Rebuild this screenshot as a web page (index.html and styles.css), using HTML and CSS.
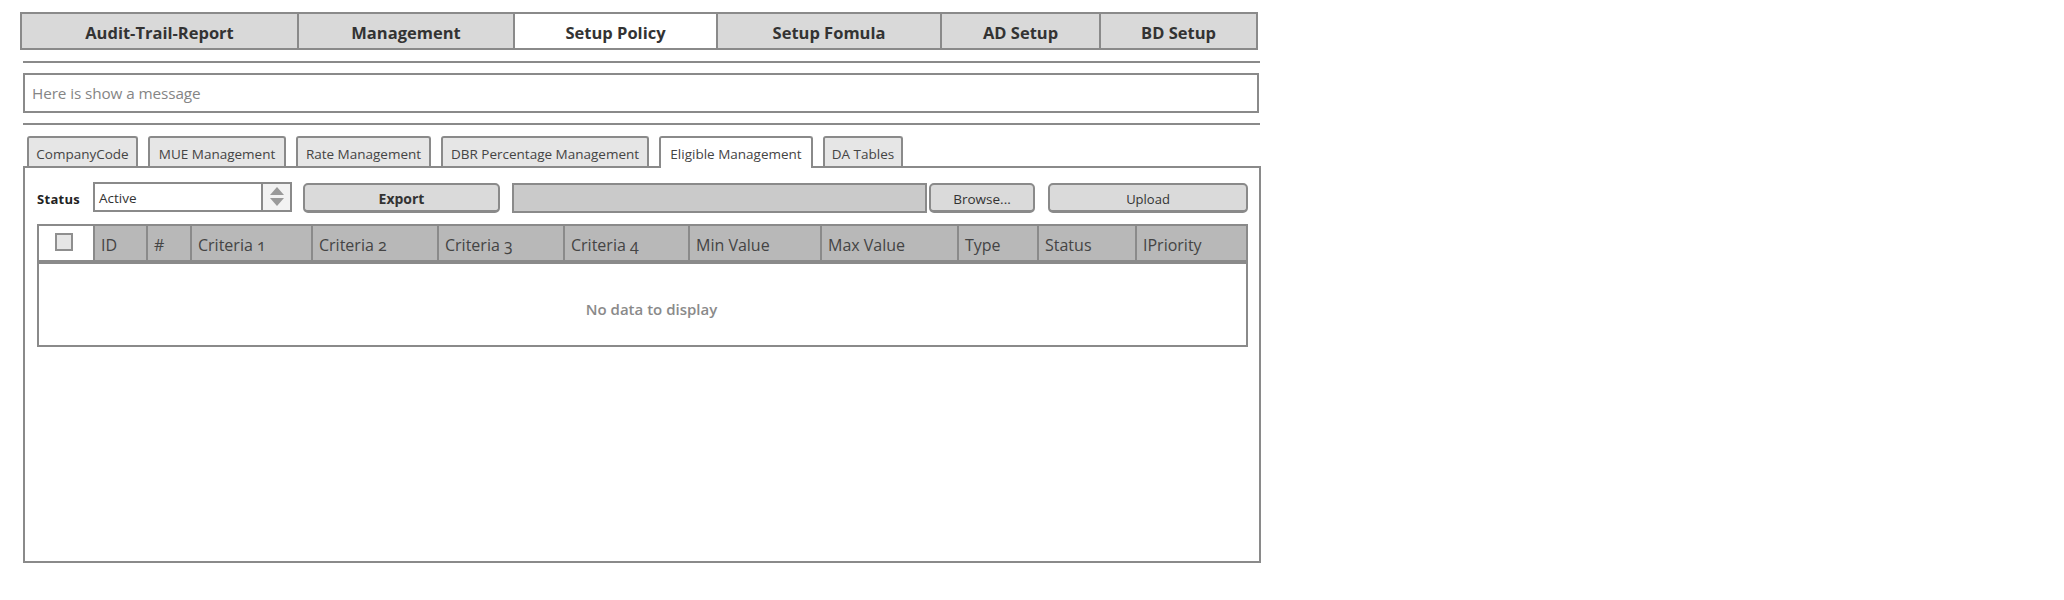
FILE: index.html
```html
<!DOCTYPE html>
<html>
<head>
<meta charset="utf-8">
<title>Eligible Management</title>
<link rel="stylesheet" href="styles.css">
</head>
<body>
<div class="page">
  <div class="maintabs">
    <div class="mtab t1">Audit-Trail-Report</div>
    <div class="mtab t2">Management</div>
    <div class="mtab t3 active">Setup Policy</div>
    <div class="mtab t4">Setup Fomula</div>
    <div class="mtab t5">AD Setup</div>
    <div class="mtab t6">BD Setup</div>
  </div>
  <div class="rule"></div>
  <div class="message">Here is show a message</div>
  <div class="rule rule2"></div>
  <div class="subtabs">
    <div class="stab s1">CompanyCode</div>
    <div class="stab s2">MUE Management</div>
    <div class="stab s3">Rate Management</div>
    <div class="stab s4">DBR Percentage Management</div>
    <div class="stab s5 active">Eligible Management</div>
    <div class="stab s6">DA Tables</div>
  </div>
  <div class="panel">
    <div class="toolbar">
      <span class="label">Status</span>
      <div class="select">
        <span class="select-value">Active</span>
        <span class="spinner">
          <svg width="14" height="20" viewBox="0 0 14 20"><polygon points="7,0 14,8 0,8" fill="#9a9a9a"/><polygon points="0,11 14,11 7,19" fill="#9a9a9a"/></svg>
        </span>
      </div>
      <button class="btn btn-export">Export</button>
      <div class="file"></div>
      <button class="btn btn-browse">Browse...</button>
      <button class="btn btn-upload">Upload</button>
    </div>
    <div class="grid">
      <div class="ghead">
        <div class="hcell chk"><span class="checkbox"></span></div>
        <div class="hcell">ID</div>
        <div class="hcell">#</div>
        <div class="hcell">Criteria 1</div>
        <div class="hcell">Criteria 2</div>
        <div class="hcell">Criteria 3</div>
        <div class="hcell">Criteria 4</div>
        <div class="hcell">Min Value</div>
        <div class="hcell">Max Value</div>
        <div class="hcell">Type</div>
        <div class="hcell">Status</div>
        <div class="hcell">IPriority</div>
      </div>
      <div class="gbody">No data to display</div>
    </div>
  </div>
</div>
</body>
</html>
```

FILE: styles.css
```css
* { box-sizing: border-box; }
html, body { margin: 0; padding: 0; background: #fff; }
body {
  font-family: "Open Sans", "Liberation Sans", sans-serif;
  color: #333;
}
.page {
  margin: 12px 0 0 20px;
  width: 1241px;
}
.maintabs {
  display: flex;
  width: 1238px;
  height: 38px;
  border: 2px solid #8a8a8a;
  background: #d9d9d9;
}
.mtab {
  display: flex;
  align-items: center;
  justify-content: center;
  font-weight: 700;
  font-size: 16.5px;
  color: #333;
  border-left: 2px solid #8a8a8a;
  height: 100%;
  padding-top: 2px;
}
.mtab.t1 { border-left: none; width: 275px; }
.mtab.t2 { width: 216px; }
.mtab.t3 { width: 203px; }
.mtab.t4 { width: 224px; }
.mtab.t5 { width: 159px; }
.mtab.t6 { flex: 1; }
.mtab.active { background: #fff; }

.rule {
  margin: 11px 0 0 3px;
  width: 1237px;
  height: 2px;
  background: #8a8a8a;
}
.rule2 { margin-top: 10px; }
.message {
  margin: 10px 0 0 3px;
  width: 1236px;
  height: 40px;
  border: 2px solid #8a8a8a;
  display: flex;
  align-items: center;
  padding-left: 7px;
  font-size: 15.3px;
  color: #858585;
  letter-spacing: -0.1px;
}

.subtabs {
  display: flex;
  align-items: flex-start;
  gap: 10px;
  margin: 11px 0 0 7px;
  height: 30px;
  position: relative;
  z-index: 1;
}
.stab {
  height: 30px;
  border: 2px solid #8a8a8a;
  border-bottom: none;
  border-radius: 3px 3px 0 0;
  background: #e6e6e6;
  font-size: 13.5px;
  color: #444;
  display: flex;
  align-items: center;
  justify-content: center;
  padding-top: 3px;
}
.stab.s1 { width: 111px; }
.stab.s2 { width: 138px; }
.stab.s3 { width: 135px; }
.stab.s4 { width: 208px; }
.stab.s5 { width: 154px; }
.stab.s6 { width: 80px; }
.stab.active { background: #fff; height: 32px; padding-top: 1px; }

.panel {
  margin: 0 0 0 3px;
  width: 1238px;
  height: 397px;
  border: 2px solid #8a8a8a;
  padding: 14px 11px 0 12px;
}
.toolbar {
  display: flex;
  align-items: center;
  height: 31px;
}
.label {
  font-weight: 700;
  font-size: 13px;
  letter-spacing: 0.3px;
  color: #222;
  width: 56px;
  padding-top: 3px;
}
.select {
  width: 199px;
  height: 30px;
  border: 2px solid #8a8a8a;
  display: flex;
  align-self: flex-start;
}
.select-value {
  flex: 1;
  display: flex;
  align-items: center;
  padding: 2px 0 0 4px;
  font-size: 13.5px;
  color: #333;
}
.spinner {
  width: 29px;
  border-left: 2px solid #8a8a8a;
  background: #f2f2f2;
  display: flex;
  align-items: center;
  justify-content: center;
}
.btn {
  font-family: inherit;
  height: 30px;
  border: 2px solid #8a8a8a;
  border-bottom-width: 3px;
  border-radius: 5px;
  background: #dadada;
  color: #333;
  font-size: 13px;
  padding: 2px 0 0 0;
  margin: 0;
  align-self: flex-end;
}
.btn-export {
  margin-left: 11px;
  width: 197px;
  font-weight: 700;
  font-size: 14px;
}
.file {
  margin-left: 12px;
  width: 415px;
  height: 30px;
  background: #cacaca;
  border: 2px solid #8a8a8a;
  align-self: flex-end;
}
.btn-browse {
  margin-left: 2px;
  width: 106px;
  font-size: 13.5px;
}
.btn-upload {
  margin-left: 13px;
  width: 200px;
}

.grid {
  margin-top: 11px;
  width: 1211px;
  height: 123px;
  border: 2px solid #8a8a8a;
  display: flex;
  flex-direction: column;
}
.ghead {
  display: grid;
  grid-template-columns: 54px 53px 44px 121px 126px 126px 125px 132px 137px 80px 98px 1fr;
  height: 38px;
  background: #b8b8b8;
  border-bottom: 4px solid #8a8a8a;
}
.hcell {
  border-left: 2px solid #8a8a8a;
  padding: 3px 0 0 6px;
  font-size: 16px;
  color: #444;
  display: flex;
  align-items: center;
  font-variant-numeric: oldstyle-nums;
}
.hcell.chk {
  border-left: none;
  background: #fff;
  justify-content: center;
  padding: 0 5px 0 0;
}
.checkbox {
  width: 18px;
  height: 18px;
  border: 2px solid #8f8f8f;
  background: #e6e6e6;
  margin-top: -2px;
}
.gbody {
  flex: 1;
  display: flex;
  align-items: center;
  justify-content: center;
  padding: 8px 0 0 18px;
  font-size: 15px;
  font-weight: 600;
  color: #8a8a8a;
}
```
